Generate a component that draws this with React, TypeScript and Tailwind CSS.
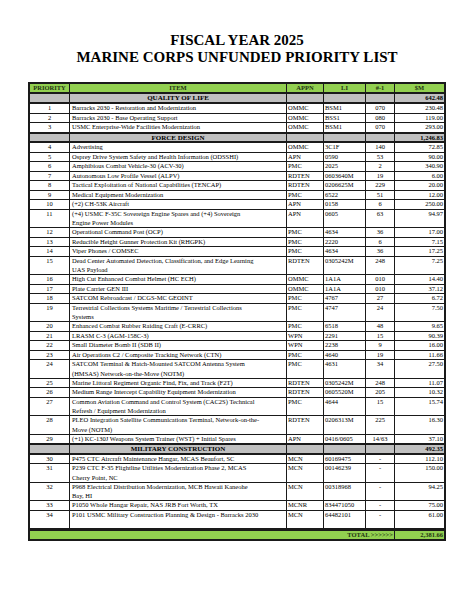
type Item = {
  kind: 'item';
  pri: string;
  text: string[];
  appn: string;
  li: string;
  n1: string;
  m: string;
  tall?: boolean;
};
type Section = { kind: 'section'; title: string; m: string };
type Row = Item | Section;

const it = (pri: string, text: string | string[], appn: string, li: string, n1: string, m: string, tall = false): Item => ({
  kind: 'item',
  pri,
  text: Array.isArray(text) ? text : [text],
  appn,
  li,
  n1,
  m,
  tall: tall || Array.isArray(text),
});

const rows: Row[] = [
  { kind: 'section', title: 'QUALITY OF LIFE', m: '642.48' },
  it('1', 'Barracks 2030 - Restoration and Modernization', 'OMMC', 'BSM1', '070', '230.48'),
  it('2', 'Barracks 2030 - Base Operating Support', 'OMMC', 'BSS1', '080', '119.00'),
  it('3', 'USMC Enterprise-Wide Facilities Modernization', 'OMMC', 'BSM1', '070', '293.00'),
  { kind: 'section', title: 'FORCE DESIGN', m: '1,246.83' },
  it('4', 'Advertising', 'OMMC', '3C1F', '140', '72.85'),
  it('5', 'Osprey Drive System Safety and Health Information  (ODSSHI)', 'APN', '0590', '53', '90.00'),
  it('6', 'Amphibious Combat Vehicle-30 (ACV-30)', 'PMC', '2025', '2', '340.90'),
  it('7', 'Autonomous Low Profile Vessel (ALPV)', 'RDTEN', '0603640M', '19', '6.00'),
  it('8', 'Tactical Exploitation of National Capabilities (TENCAP)', 'RDTEN', '0206625M', '229', '20.00'),
  it('9', 'Medical Equipment Modernization', 'PMC', '6522', '51', '12.00'),
  it('10', '(+2) CH-53K Aircraft', 'APN', '0158', '6', '250.00'),
  it('11', ['(+4) USMC F-35C Sovereign Engine Spares and (+4) Sovereign', 'Engine Power Modules'], 'APN', '0605', '63', '94.97'),
  it('12', 'Operational Command Post (OCP)', 'PMC', '4634', '36', '17.00'),
  it('13', 'Reducible Height Gunner Protection Kit (RHGPK)', 'PMC', '2220', '6', '7.15'),
  it('14', 'Viper Phones / COMSEC', 'PMC', '4634', '36', '17.25'),
  it('15', ['Dead Center Automated Detection, Classification, and Edge Learning', 'UAS Payload'], 'RDTEN', '0305242M', '248', '7.25'),
  it('16', 'High Cut Enhanced Combat Helmet (HC ECH)', 'OMMC', '1A1A', '010', '14.40'),
  it('17', 'Plate Carrier GEN III', 'OMMC', '1A1A', '010', '37.12'),
  it('18', 'SATCOM Rebroadcast / DCGS-MC GEOINT', 'PMC', '4767', '27', '6.72'),
  it('19', ['Terrestrial Collections Systems Maritime / Terrestrial Collections', 'Systems'], 'PMC', '4747', '24', '7.50'),
  it('20', 'Enhanced Combat Rubber Raiding Craft (E-CRRC)', 'PMC', '6518', '48', '9.65'),
  it('21', 'LRASM C-3 (AGM-158C-3)', 'WPN', '2291', '15', '90.39'),
  it('22', 'Small Diameter Bomb II (SDB II)', 'WPN', '2238', '9', '16.00'),
  it('23', 'Air Operations C2 / Composite Tracking Network (CTN)', 'PMC', '4640', '19', '11.66'),
  it('24', ['SATCOM Terminal & Hatch-Mounted SATCOM Antenna System', '(HMSAS) Network-on-the-Move (NOTM)'], 'PMC', '4631', '34', '27.50'),
  it('25', 'Marine Littoral Regiment Organic Find, Fix, and Track (F2T)', 'RDTEN', '0305242M', '248', '11.07'),
  it('26', 'Medium Range Intercept Capability Equipment Modernization', 'RDTEN', '0605520M', '205', '10.32'),
  it('27', ['Common Aviation Command and Control System (CAC2S) Technical', 'Refresh / Equipment Modernization'], 'PMC', '4644', '15', '15.74'),
  it('28', ['PLEO Integration Satellite Communications Terminal, Network-on-the-', 'Move (NOTM)'], 'RDTEN', '0206313M', '225', '16.30'),
  it('29', '(+1) KC-130J Weapons System Trainer (WST) + Initial Spares', 'APN', '0416/0605', '14/63', '37.10'),
  { kind: 'section', title: 'MILITARY CONSTRUCTION', m: '492.35' },
  it('30', 'P475 CTC Aircraft Maintenance Hangar, MCAS Beaufort, SC', 'MCN', '60169475', '-', '112.10'),
  it('31', ['P239 CTC F-35 Flightline Utilities Modernization Phase 2, MCAS', 'Cherry Point, NC'], 'MCN', '00146239', '-', '150.00'),
  it('32', ['P968 Electrical Distribution Modernization, MCB Hawaii Kaneohe', 'Bay, HI'], 'MCN', '00318968', '-', '94.25'),
  it('33', 'P1050 Whole Hangar Repair, NAS JRB Fort Worth, TX', 'MCNR', '834471050', '-', '75.00'),
  it('34', 'P101 USMC Military Construction Planning & Design - Barracks 2030', 'MCN', '64482101', '-', '61.00', true),
];

const cols = 'grid grid-cols-[40px_217px_37px_42px_29px_49px]';

function ItemRow({ r }: { r: Item }) {
  return (
    <div className={`${cols} border-b border-[#1a1a1a] leading-[8.5px] ${r.tall ? 'h-[18.5px]' : 'h-[9.5px]'}`}>
      <div className="border-r border-[#1a1a1a] text-center">{r.pri}</div>
      <div className="border-r border-[#1a1a1a] pl-[2px] whitespace-nowrap overflow-hidden">
        {r.text.map((t, i) => (
          <div key={i} className={i > 0 ? 'mt-[1px]' : ''}>{t}</div>
        ))}
      </div>
      <div className="border-r border-[#1a1a1a] pl-[1px]">{r.appn}</div>
      <div className="border-r border-[#1a1a1a] pl-[1px]">{r.li}</div>
      <div className="border-r border-[#1a1a1a] text-center">{r.n1}</div>
      <div className="text-right pr-[1px]">{r.m}</div>
    </div>
  );
}

function SectionRow({ r, first }: { r: Section; first: boolean }) {
  return (
    <div
      className={`${cols} bg-[#c0c0c0] border-b-2 border-[#1a1a1a] leading-[8px] font-bold ${first ? 'h-[10px]' : 'h-[10.5px] border-t'}`}
    >
      <div className="border-r border-[#1a1a1a]" />
      <div className="border-r border-[#1a1a1a] text-center text-[7px]">{r.title}</div>
      <div className="border-r border-[#1a1a1a]" />
      <div className="border-r border-[#1a1a1a]" />
      <div className="border-r border-[#1a1a1a]" />
      <div className="text-right pr-[1px]">{r.m}</div>
    </div>
  );
}

export default function App() {
  return (
    <div className="min-h-[613px] bg-white text-black font-['Liberation_Serif','Times_New_Roman',serif]">
      <div className="pt-[32px] text-center font-bold text-[15px] leading-[17px]">
        <div>FISCAL YEAR 2025</div>
        <div>MARINE CORPS UNFUNDED PRIORITY LIST</div>
      </div>

      <div className="mx-auto mt-[16px] w-[418px] border-2 border-[#1a1a1a] text-[6.5px]">
        {/* header */}
        <div className={`${cols} bg-[#92d050] border-b-2 border-[#1a1a1a] h-[10px] leading-[8px] font-bold text-[#1e3312]`}>
          <div className="border-r border-[#1a1a1a] text-center">PRIORITY</div>
          <div className="border-r border-[#1a1a1a] text-center">ITEM</div>
          <div className="border-r border-[#1a1a1a] text-center">APPN</div>
          <div className="border-r border-[#1a1a1a] text-center">LI</div>
          <div className="border-r border-[#1a1a1a] text-center">#-1</div>
          <div className="text-center">$M</div>
        </div>

        {rows.map((r, i) =>
          r.kind === 'section' ? (
            <SectionRow key={i} r={r} first={i === 0} />
          ) : (
            <ItemRow key={i} r={r} />
          )
        )}

        {/* total */}
        <div className="grid grid-cols-[365px_49px] bg-[#92d050] border-t-2 border-[#1a1a1a] h-[9.5px] leading-[7.5px] font-bold text-[#1e3312]">
          <div className="border-r border-[#1a1a1a] text-right pr-[1px]">TOTAL &gt;&gt;&gt;&gt;&gt;&gt;</div>
          <div className="text-right pr-[1px]">2,381.66</div>
        </div>
      </div>
    </div>
  );
}
